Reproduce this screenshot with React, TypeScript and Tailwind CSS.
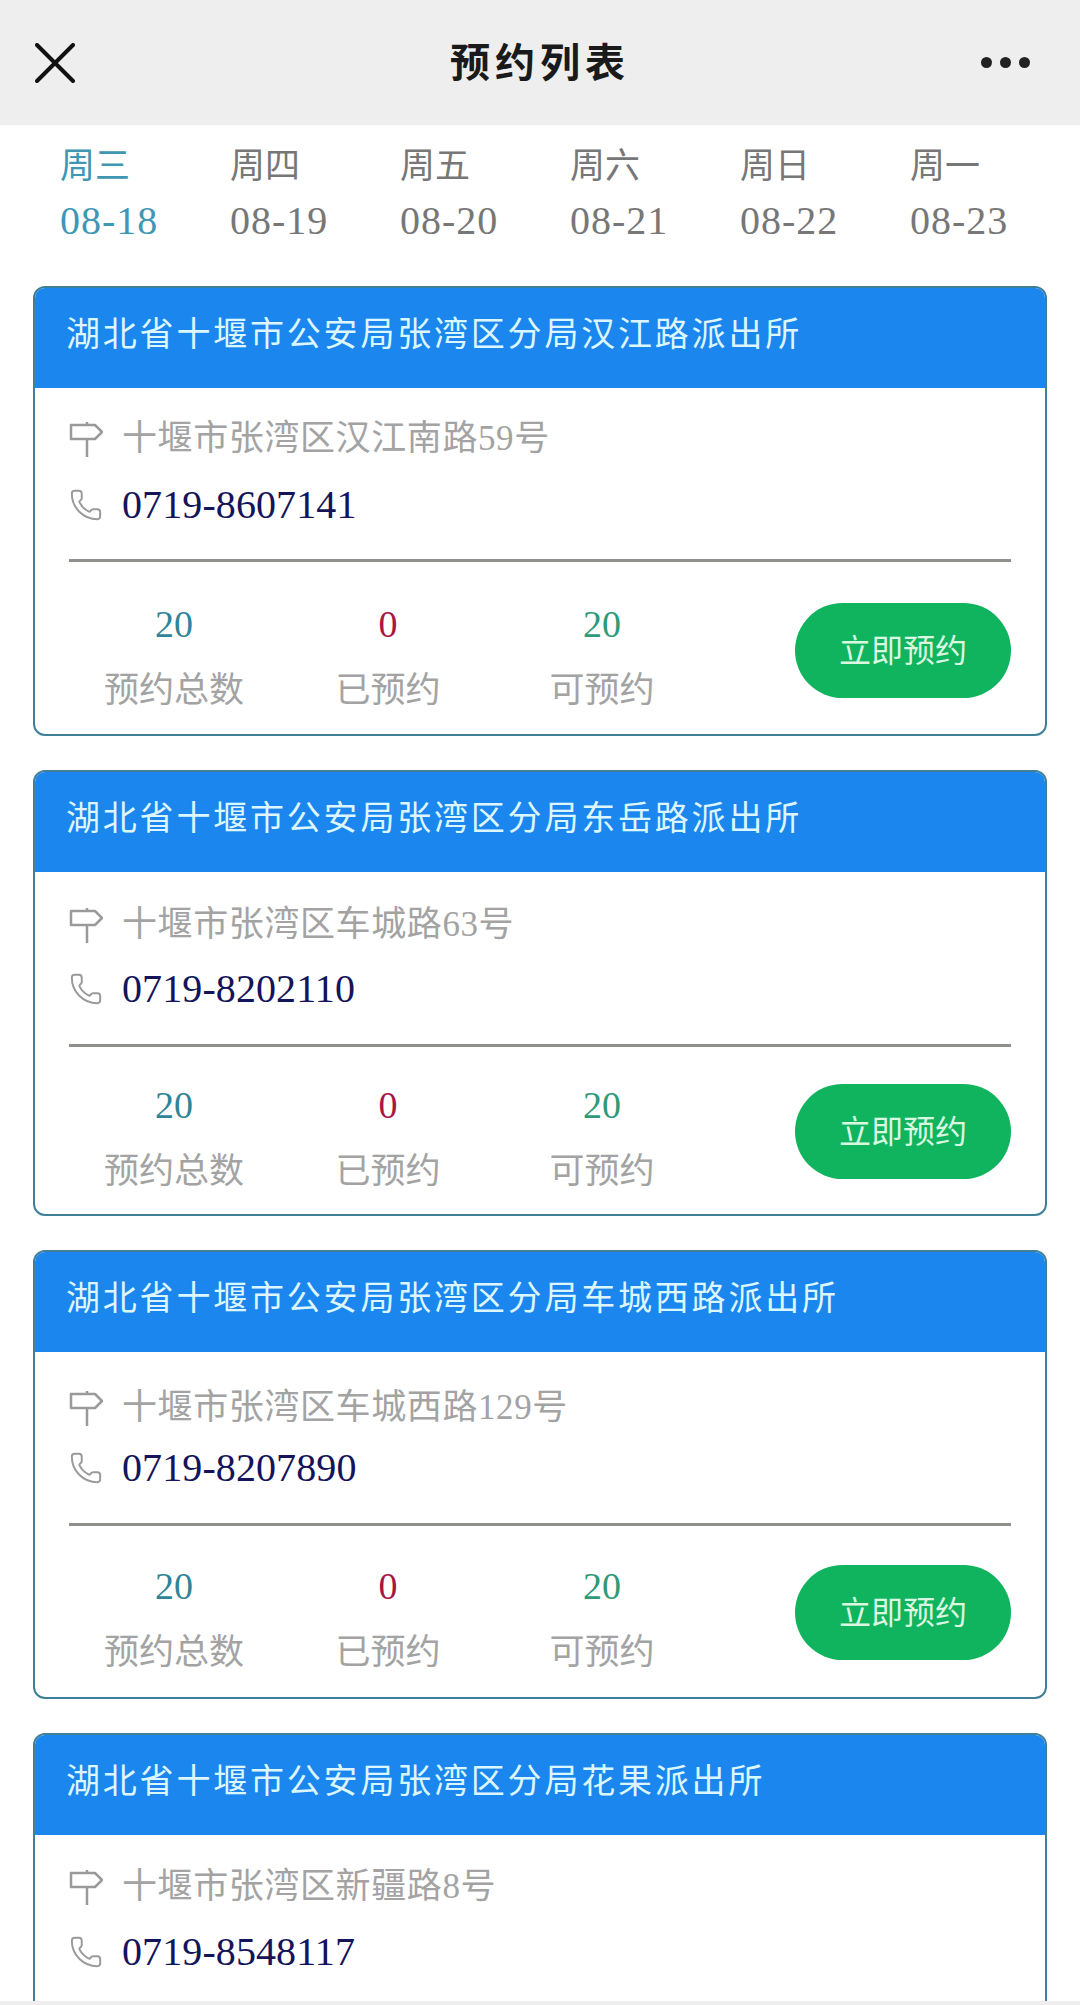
import React from 'react';
import { Phone } from 'lucide-react';

const cjk = "font-['Noto_Sans_CJK_SC','Noto_Sans',sans-serif]";
const serif = "font-['Liberation_Serif','Noto_Sans_CJK_SC',serif]";

const days = [
  { week: '周三', date: '08-18', active: true },
  { week: '周四', date: '08-19' },
  { week: '周五', date: '08-20' },
  { week: '周六', date: '08-21' },
  { week: '周日', date: '08-22' },
  { week: '周一', date: '08-23' },
];

interface Station {
  name: string;
  address: string;
  phone: string;
  top: string; // space between header and address row
  phoneGap: string;
  lineGap: string;
  statsGap: string;
  bottom: string;
  showStats: boolean;
}

const stations: Station[] = [
  {
    name: '湖北省十堰市公安局张湾区分局汉江路派出所',
    address: '十堰市张湾区汉江南路59号',
    phone: '0719-8607141',
    top: 'pt-[31px]',
    phoneGap: 'mt-[26px]',
    lineGap: 'mt-[34px]',
    statsGap: 'mt-[41px]',
    bottom: 'pb-[27px]',
    showStats: true,
  },
  {
    name: '湖北省十堰市公安局张湾区分局东岳路派出所',
    address: '十堰市张湾区车城路63号',
    phone: '0719-8202110',
    top: 'pt-[33px]',
    phoneGap: 'mt-[24px]',
    lineGap: 'mt-[35px]',
    statsGap: 'mt-[37px]',
    bottom: 'pb-[26px]',
    showStats: true,
  },
  {
    name: '湖北省十堰市公安局张湾区分局车城西路派出所',
    address: '十堰市张湾区车城西路129号',
    phone: '0719-8207890',
    top: 'pt-[36px]',
    phoneGap: 'mt-[20px]',
    lineGap: 'mt-[35px]',
    statsGap: 'mt-[39px]',
    bottom: 'pb-[28px]',
    showStats: true,
  },
  {
    name: '湖北省十堰市公安局张湾区分局花果派出所',
    address: '十堰市张湾区新疆路8号',
    phone: '0719-8548117',
    top: 'pt-[32px]',
    phoneGap: 'mt-[25px]',
    lineGap: 'mt-[36px]',
    statsGap: 'mt-[42px]',
    bottom: 'pb-[80px]',
    showStats: false,
  },
];

const stats = [
  { value: '20', label: '预约总数', color: 'text-[#2f8597]' },
  { value: '0', label: '已预约', color: 'text-[#a8173f]' },
  { value: '20', label: '可预约', color: 'text-[#2f9a78]' },
];

const SignpostIcon = () => (
  <svg width="34" height="36" viewBox="0 0 34 36" fill="none" stroke="#9a9a9a" strokeWidth="2.5" className="shrink-0">
    <path d="M2 4H26L33 11L26 18H2Z" strokeLinejoin="round" />
    <path d="M18 18V36M18 1V4" />
  </svg>
);

const StationCard = ({ station }: { station: Station }) => (
  <div className="rounded-[12px] border-2 border-[#3f8098] bg-white overflow-hidden shrink-0">
    <div className="h-[100px] bg-[#1a86ee] pl-[31px] pt-[22px]">
      <div className={`${cjk} text-[34px] leading-[44px] tracking-[2.8px] text-[#dcf6ff]`}>{station.name}</div>
    </div>
    <div className={`px-[34px] ${station.top} ${station.bottom}`}>
      <div className="flex items-center h-[40px]">
        <SignpostIcon />
        <span className={`ml-[19px] ${serif} text-[35px] tracking-[0.6px] leading-[40px] text-[#a3a3a3]`}>{station.address}</span>
      </div>
      <div className={`flex items-center h-[40px] ${station.phoneGap}`}>
        <Phone size={34} strokeWidth={1.4} className="text-[#9a9a9a] shrink-0" />
        <span className={`ml-[19px] ${serif} text-[40px] leading-[40px] tracking-[0.1px] text-[#14145a]`}>{station.phone}</span>
      </div>
      {station.showStats && (
        <>
          <div className={`h-[3px] bg-[#8f8f8b] ${station.lineGap}`} />
          <div className={`flex items-start justify-between ${station.statsGap}`}>
            <div className="flex -ml-[2px]">
              {stats.map((s) => (
                <div key={s.label} className="w-[214px] flex flex-col items-center -mt-[2px]">
                  <div className={`${serif} text-[38px] leading-[46px] ${s.color}`}>{s.value}</div>
                  <div className={`${cjk} mt-[20px] text-[35px] leading-[40px] text-[#a3a3a3]`}>{s.label}</div>
                </div>
              ))}
            </div>
            <button className={`w-[216px] h-[95px] pb-[6px] rounded-full bg-[#10b45e] ${cjk} text-[32px] text-[#d8f8e0]`}>立即预约</button>
          </div>
        </>
      )}
    </div>
  </div>
);

export default function App() {
  return (
    <div className="w-[1080px] h-[2005px] flex flex-col overflow-hidden bg-white">
      {/* Top bar */}
      <div className="h-[125px] shrink-0 bg-[#eeeeee] flex items-center px-[35px]">
        <div className="flex-1">
          <svg width="40" height="40" viewBox="0 0 40 40" stroke="#111" strokeWidth="4" strokeLinecap="round">
            <path d="M2 2L38 38M38 2L2 38" />
          </svg>
        </div>
        <div className={`${cjk} font-bold text-[40px] tracking-[5px] text-[#1a1a1a] pb-[6px]`}>预约列表</div>
        <div className="flex-1 flex justify-end">
          <div className="flex gap-[8px] mr-[15px]">
            <span className="w-[11px] h-[11px] rounded-full bg-[#222]" />
            <span className="w-[11px] h-[11px] rounded-full bg-[#222]" />
            <span className="w-[11px] h-[11px] rounded-full bg-[#222]" />
          </div>
        </div>
      </div>

      {/* Days */}
      <div className="flex pl-[60px] pt-[18px] shrink-0">
        {days.map((d) => (
          <div key={d.date} className={`w-[170px] ${d.active ? 'text-[#3f97b3]' : 'text-[#777777]'}`}>
            <div className={`${cjk} text-[35px] leading-[40px]`}>{d.week}</div>
            <div className={`${serif} mt-[18px] text-[40px] leading-[40px] tracking-[1px]`}>{d.date}</div>
          </div>
        ))}
      </div>

      {/* Cards */}
      <div className="flex-1 min-h-0 overflow-hidden flex flex-col gap-[34px] px-[33px] pt-[45px]">
        {stations.map((s) => (
          <StationCard key={s.phone} station={s} />
        ))}
      </div>
      <div className="h-[4px] shrink-0 bg-[#eeeeee]" />
    </div>
  );
}
